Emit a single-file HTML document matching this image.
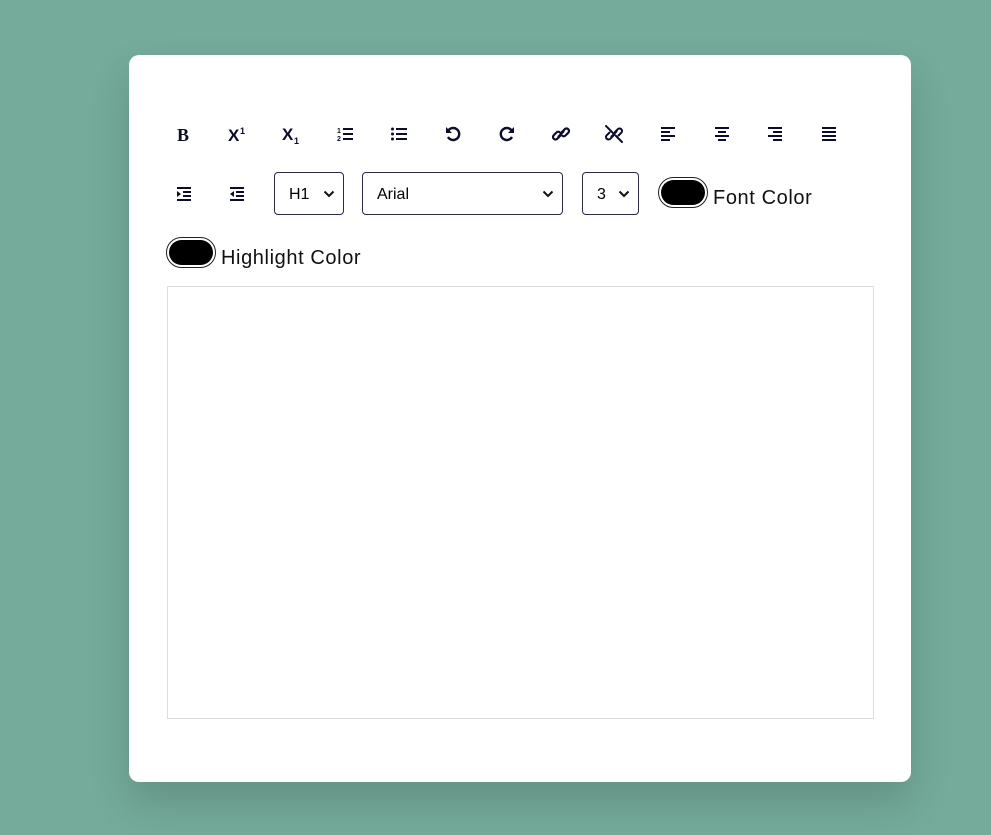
<!DOCTYPE html>
<html><head><style>
body{margin:0;width:991px;height:835px;background:#74ab9b;font-family:"Liberation Sans",sans-serif;position:relative;overflow:hidden}
.card{position:absolute;left:129px;top:55px;width:782px;height:727px;background:#fff;border-radius:10px;box-shadow:0 20px 40px rgba(0,0,0,0.15)}
.ic{position:absolute;width:20px;height:20px;top:124px}
.ic svg{width:20px;height:20px}
.sel{position:absolute;top:172px;height:43px;border:1px solid #2a2a44;border-radius:4px;box-sizing:border-box;font-size:16px;color:#000;line-height:43px;padding-left:14px}
.chev{position:absolute;right:8px;top:17px;width:12px;height:8px}
.sw{position:absolute;width:50px;height:31px;border:1.5px solid #222;border-radius:16px;box-sizing:border-box;background:#fff}
.sw::after{content:"";position:absolute;left:2px;top:2px;right:2px;bottom:2px;background:#000;border-radius:13px}
.lbl{position:absolute;font-size:20px;color:#111;letter-spacing:0.6px}
.ed{position:absolute;left:167px;top:286px;width:707px;height:433px;border:1px solid #ddd;box-sizing:border-box}
</style></head><body>
<div class="card"></div>
<svg width="0" height="0" style="position:absolute"><defs>
<symbol id="chev" viewBox="0 0 12 8"><path d="M1.5 1.5L6 6l4.5-4.5" stroke="#111" stroke-width="2" fill="none"/></symbol>
</defs></svg>
<div class="ic" style="left:174px"><svg viewBox="0 0 20 20"><text x="3" y="17" font-family="Liberation Serif" font-weight="bold" font-size="18" fill="#0b0b2b">B</text></svg></div>
<div class="ic" style="left:227px"><svg viewBox="0 0 20 20"><text x="1" y="17" font-weight="bold" font-size="17" fill="#0b0b2b">X</text><text x="13" y="10" font-weight="bold" font-size="9" fill="#0b0b2b">1</text></svg></div>
<div class="ic" style="left:281px"><svg viewBox="0 0 20 20"><text x="1" y="16" font-weight="bold" font-size="17" fill="#0b0b2b">X</text><text x="13" y="20" font-weight="bold" font-size="9" fill="#0b0b2b">1</text></svg></div>
<div class="ic" style="left:335px"><svg viewBox="0 0 20 20"><text x="2" y="9" font-size="7" font-weight="bold" fill="#0b0b2b">1</text><text x="2" y="17" font-size="7" font-weight="bold" fill="#0b0b2b">2</text><path d="M8 5h10M8 10h10M8 15h10" stroke="#0b0b2b" stroke-width="2"/></svg></div>
<div class="ic" style="left:389px"><svg viewBox="0 0 20 20"><circle cx="3.5" cy="5" r="1.5" fill="#0b0b2b"/><circle cx="3.5" cy="10" r="1.5" fill="#0b0b2b"/><circle cx="3.5" cy="15" r="1.5" fill="#0b0b2b"/><path d="M7 5h11M7 10h11M7 15h11" stroke="#0b0b2b" stroke-width="2"/></svg></div>
<div class="ic" style="left:443px"><svg viewBox="0 0 20 20"><path d="M5 7a6 6 0 1 1 0 6" stroke="#0b0b2b" stroke-width="2.4" fill="none"/><path d="M3 3v6h6z" fill="#0b0b2b"/></svg></div>
<div class="ic" style="left:497px"><svg viewBox="0 0 20 20"><path d="M15 7a6 6 0 1 0 0 6" stroke="#0b0b2b" stroke-width="2.4" fill="none"/><path d="M17 3v6h-6z" fill="#0b0b2b"/></svg></div>
<div class="ic" style="left:551px"><svg viewBox="0 0 20 20"><path d="M9 12l-3 3a2.5 2.5 0 0 1-3.5-3.5l3-3a2.5 2.5 0 0 1 3.5 0M11 8l3-3a2.5 2.5 0 0 1 3.5 3.5l-3 3a2.5 2.5 0 0 1-3.5 0M7.5 12.5l5-5" stroke="#0b0b2b" stroke-width="2.2" fill="none" stroke-linecap="round"/></svg></div>
<div class="ic" style="left:604px"><svg viewBox="0 0 20 20"><path d="M9 12l-3 3a2.5 2.5 0 0 1-3.5-3.5l3-3M11 8l3-3a2.5 2.5 0 0 1 3.5 3.5l-3 3M7.5 12.5l5-5M2 2l16 16" stroke="#0b0b2b" stroke-width="2" fill="none" stroke-linecap="round"/></svg></div>
<div class="ic" style="left:658px"><svg viewBox="0 0 20 20"><path d="M3 4h14M3 8h9M3 12h14M3 16h9" stroke="#0b0b2b" stroke-width="2"/></svg></div>
<div class="ic" style="left:712px"><svg viewBox="0 0 20 20"><path d="M3 4h14M6 8h8M3 12h14M6 16h8" stroke="#0b0b2b" stroke-width="2"/></svg></div>
<div class="ic" style="left:765px"><svg viewBox="0 0 20 20"><path d="M3 4h14M8 8h9M3 12h14M8 16h9" stroke="#0b0b2b" stroke-width="2"/></svg></div>
<div class="ic" style="left:819px"><svg viewBox="0 0 20 20"><path d="M3 4h14M3 8h14M3 12h14M3 16h14" stroke="#0b0b2b" stroke-width="2"/></svg></div>
<div class="ic" style="left:174px;top:184px"><svg viewBox="0 0 20 20"><path d="M3 4h14M9 8h8M9 12h8M3 16h14" stroke="#0b0b2b" stroke-width="2"/><path d="M3 7l4 3-4 3z" fill="#0b0b2b"/></svg></div>
<div class="ic" style="left:227px;top:184px"><svg viewBox="0 0 20 20"><path d="M3 4h14M9 8h8M9 12h8M3 16h14" stroke="#0b0b2b" stroke-width="2"/><path d="M7 7l-4 3 4 3z" fill="#0b0b2b"/></svg></div>
<div class="sel" style="left:274px;width:70px">H1<svg class="chev"><use href="#chev"/></svg></div>
<div class="sel" style="left:362px;width:201px">Arial<svg class="chev"><use href="#chev"/></svg></div>
<div class="sel" style="left:582px;width:57px">3<svg class="chev"><use href="#chev"/></svg></div>
<div class="sw" style="left:658px;top:177px"></div>
<div class="lbl" style="left:713px;top:187px">Font Color</div>
<div class="sw" style="left:166px;top:237px"></div>
<div class="lbl" style="left:221px;top:247px">Highlight Color</div>
<div class="ed"></div>
</body></html>
